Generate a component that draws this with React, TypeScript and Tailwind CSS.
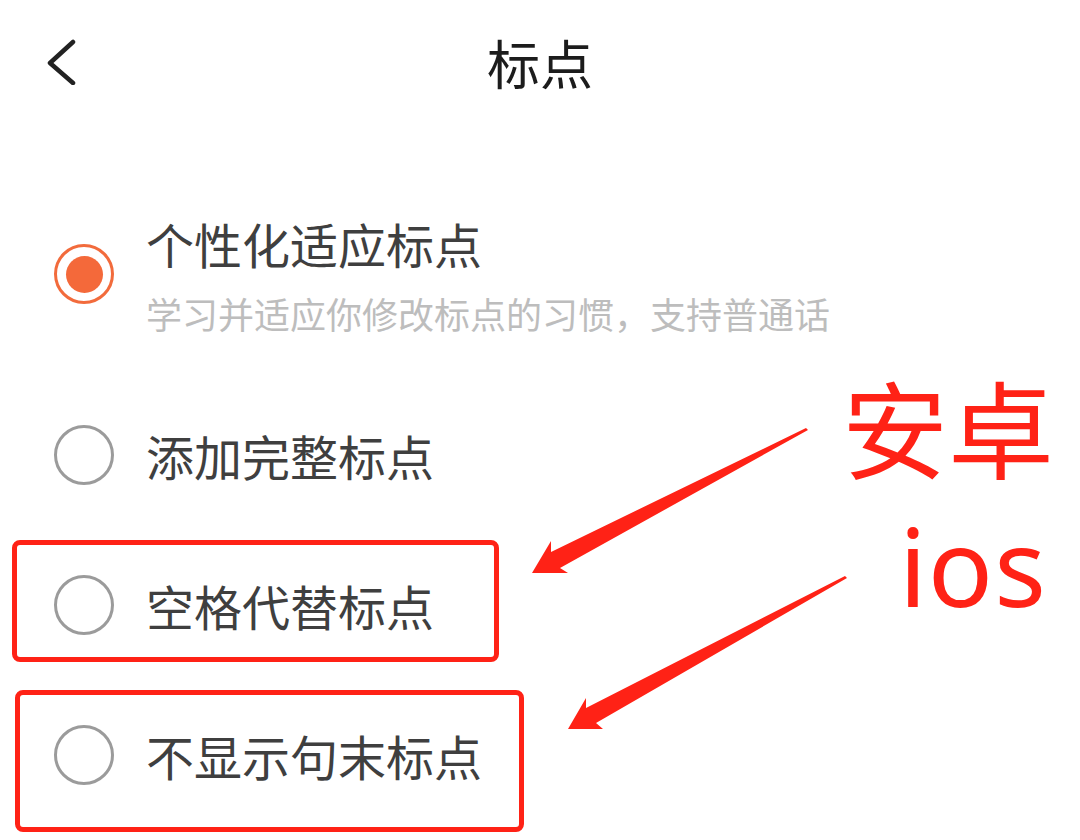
import type { ReactNode } from 'react';

const FONT = '"Noto Sans CJK SC", "Noto Sans", sans-serif';

type Option = { label: string; hint?: string; checked?: boolean };

const OPTIONS: Option[] = [
  { label: '个性化适应标点', hint: '学习并适应你修改标点的习惯，支持普通话', checked: true },
  { label: '添加完整标点' },
  { label: '空格代替标点' },
  { label: '不显示句末标点' },
];

function Radio({ checked }: { checked?: boolean }) {
  if (checked) {
    return (
      <div className="w-[60px] h-[60px] shrink-0 rounded-full border-[3px] border-[#f26b3c] flex items-center justify-center">
        <div className="w-[37px] h-[37px] rounded-full bg-[#f4693a]" />
      </div>
    );
  }
  return <div className="w-[60px] h-[60px] shrink-0 rounded-full border-[3px] border-[#9b9b9b]" />;
}

function Row({ opt }: { opt: Option }) {
  return (
    <div className="flex items-center gap-[32px]">
      <Radio checked={opt.checked} />
      <div className="flex flex-col">
        <span className="text-[48px] leading-[60px] text-[#3f3f3f]">{opt.label}</span>
        {opt.hint && <span className="mt-[18px] text-[36px] leading-[44px] text-[#bdbdbd]">{opt.hint}</span>}
      </div>
    </div>
  );
}

function Overlay({ children }: { children: ReactNode }) {
  return <div className="absolute inset-0 pointer-events-none">{children}</div>;
}

export default function App() {
  return (
    <div className="relative w-[1080px] h-[840px] bg-white overflow-hidden" style={{ fontFamily: FONT }}>
      <header className="h-[124px] grid grid-cols-[1fr_auto_1fr] items-center">
        <div className="pl-[46px]">
          <svg width="30" height="46" viewBox="0 0 30 46" fill="none">
            <path d="M27 3 L4 24 L27 44" stroke="#222" strokeWidth="4.5" strokeLinecap="round" strokeLinejoin="round" />
          </svg>
        </div>
        <h1 className="text-[53px] leading-[60px] text-[#1c1c1c]">标点</h1>
        <div />
      </header>

      <div className="flex flex-col gap-[90px] pt-[89px] pl-[54px]">
        {OPTIONS.map(o => (
          <Row key={o.label} opt={o} />
        ))}
      </div>

      {/* annotations */}
      <Overlay>
        <div className="absolute left-[12px] top-[540px] w-[487px] h-[122px] border-[5px] border-[#ff2216] rounded-[8px]" />
        <div className="absolute left-[15px] top-[690px] w-[509px] h-[142px] border-[5px] border-[#ff2216] rounded-[8px]" />
        <svg className="absolute inset-0" width="1080" height="840" viewBox="0 0 1080 840">
          <polygon points="806,428 808,430 560,568 568,573 532,573 551,541 551,552" fill="#ff2216" />
          <polygon points="845,576 847,578 596,723 603,729 568,729 586,698 586,708" fill="#ff2216" />
        </svg>
        <div className="absolute left-[842px] top-[372px] h-[106px] text-[106px] leading-none text-[#ff2216]">安卓</div>
        <div
          className="absolute left-[899px] top-[512px] text-[108px] leading-[108px] text-[#ff2216] tracking-[1px]"
          style={{ fontFamily: '"Noto Sans", sans-serif' }}
        >
          ios
        </div>
      </Overlay>
    </div>
  );
}
